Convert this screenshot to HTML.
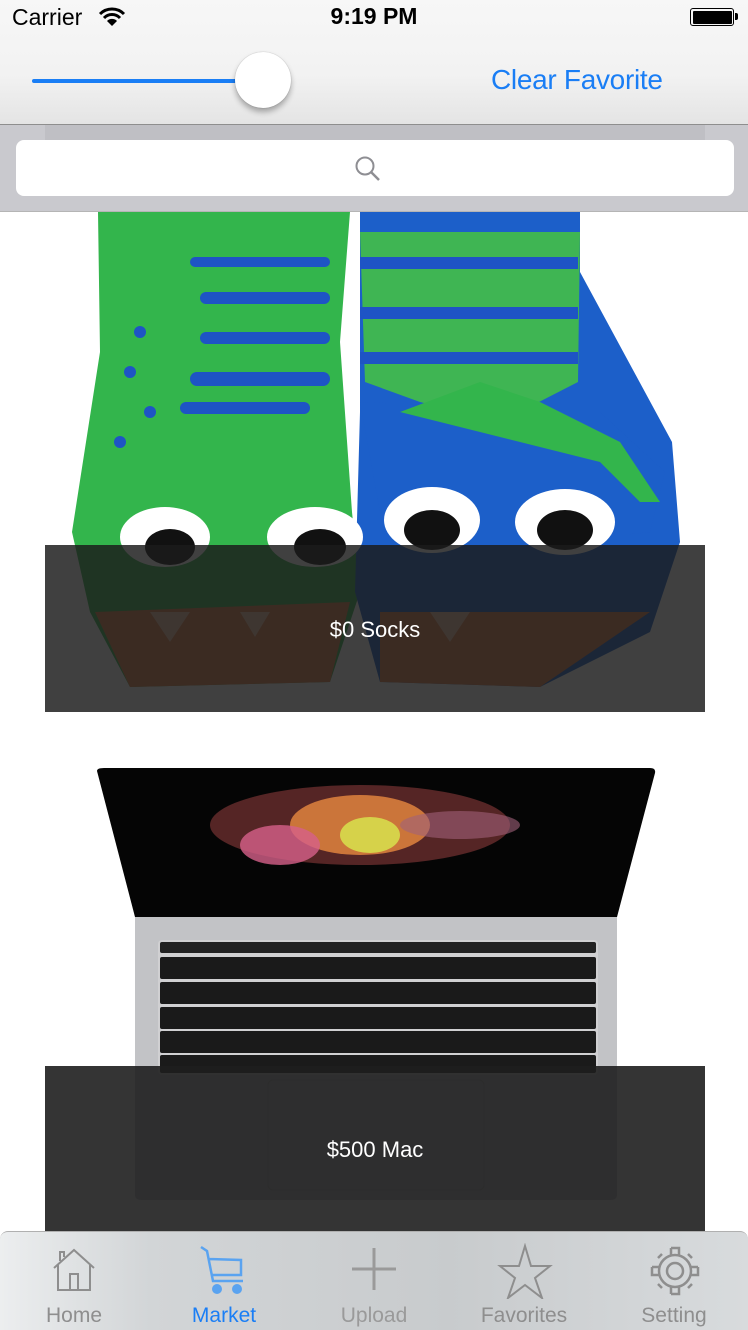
<!DOCTYPE html>
<html><head><meta charset="utf-8"><style>
*{margin:0;padding:0;box-sizing:border-box}
body{width:748px;height:1330px;overflow:hidden;background:#fff;font-family:"Liberation Sans",sans-serif;position:relative}
.abs{position:absolute}
</style></head><body>
<div class="abs" style="left:0;top:0;width:748px;height:125px;background:linear-gradient(#f7f7f7,#f2f2f2 60%,#e4e4e4);border-bottom:1px solid #8e8e8e"></div>
<div class="abs" style="left:12px;top:4px;font-size:23px;color:#000">Carrier</div>
<svg class="abs" style="left:98px;top:6px" width="28" height="22" viewBox="0 0 28 22"><path d="M2 8 A17 17 0 0 1 26 8" stroke="#000" stroke-width="3" fill="none"/><path d="M6 12 A11 11 0 0 1 22 12" stroke="#000" stroke-width="3" fill="none"/><path d="M14 20 L9 15 A7 7 0 0 1 19 15 Z" fill="#000"/></svg>
<div class="abs" style="left:0;width:748px;top:3px;text-align:center;font-size:23px;font-weight:bold">9:19 PM</div>
<div class="abs" style="left:690px;top:8px;width:44px;height:18px;border:1.5px solid #000;border-radius:3px;padding:1.5px"><div style="background:#000;width:100%;height:100%;border-radius:1px"></div></div>
<div class="abs" style="left:735px;top:13px;width:3px;height:7px;background:#000;border-radius:0 2px 2px 0"></div>
<div class="abs" style="left:32px;top:79px;width:220px;height:4px;background:#1a7ef5;border-radius:2px"></div>
<div class="abs" style="left:235px;top:52px;width:56px;height:56px;border-radius:50%;background:#fff;box-shadow:0 4px 6px rgba(0,0,0,.3),0 0 1px rgba(0,0,0,.3)"></div>
<div class="abs" style="left:491px;top:64px;font-size:28px;color:#1a7ef5;letter-spacing:-0.3px">Clear Favorite</div>
<div class="abs" style="left:0;top:125px;width:748px;height:87px;background:#c9c9ce;border-bottom:1px solid #b5b5b5"></div>
<div class="abs" style="left:45px;top:125px;width:660px;height:15px;background:#bfbfc4"></div>
<div class="abs" style="left:16px;top:140px;width:718px;height:56px;background:#fff;border-radius:8px"></div>
<svg class="abs" style="left:352px;top:154px" width="32" height="30" viewBox="0 0 32 30"><circle cx="13" cy="12" r="8.5" stroke="#8e8e93" stroke-width="2" fill="none"/><path d="M19 18 L27 26" stroke="#8e8e93" stroke-width="2.5"/></svg>
<svg class="abs" style="left:0;top:212px" width="748" height="480" viewBox="0 0 748 480">
<path d="M98 0 L350 0 L340 130 L352 300 L360 380 L330 470 L130 475 L90 400 L72 320 L100 140 Z" fill="#33b54c"/>
<path d="M360 0 L580 0 L580 60 L672 230 L680 330 L650 420 L540 475 L380 470 L355 380 L360 200 Z" fill="#1c5fc9"/>
<path d="M360 20 L580 20 L578 170 L500 210 L420 190 L365 170 Z" fill="#3fb553"/>
<g fill="#1e54c5"><rect x="190" y="45" width="140" height="10" rx="5"/><rect x="200" y="80" width="130" height="12" rx="6"/><rect x="200" y="120" width="130" height="12" rx="6"/><rect x="190" y="160" width="140" height="14" rx="7"/><rect x="180" y="190" width="130" height="12" rx="6"/><circle cx="140" cy="120" r="6"/><circle cx="130" cy="160" r="6"/><circle cx="150" cy="200" r="6"/><circle cx="120" cy="230" r="6"/></g>
<g fill="#1e54c5"><rect x="360" y="45" width="218" height="12"/><rect x="360" y="95" width="218" height="12"/><rect x="360" y="140" width="218" height="12"/></g>
<path d="M360 190 L600 200 L665 260 L650 320 L560 330 L450 330 L380 300 Z" fill="#1c5fc9"/>
<path d="M400 200 L480 170 L540 190 L620 230 L660 290 L640 290 L600 250 Z" fill="#33b54c"/>
<ellipse cx="165" cy="325" rx="45" ry="30" fill="#fff"/><ellipse cx="170" cy="335" rx="25" ry="18" fill="#111"/>
<ellipse cx="315" cy="325" rx="48" ry="30" fill="#fff"/><ellipse cx="320" cy="335" rx="26" ry="18" fill="#111"/>
<ellipse cx="432" cy="308" rx="48" ry="33" fill="#fff"/><ellipse cx="432" cy="318" rx="28" ry="20" fill="#111"/>
<ellipse cx="565" cy="310" rx="50" ry="33" fill="#fff"/><ellipse cx="565" cy="318" rx="28" ry="20" fill="#111"/>
<path d="M95 400 L350 390 L330 470 L130 475 Z" fill="#e07a45"/><path d="M380 400 L650 400 L540 475 L380 470 Z" fill="#e07a45"/>
<path d="M150 400 L170 430 L190 400 Z M240 400 L255 425 L270 400 Z M430 400 L450 430 L470 400 Z" fill="#f0c0a0"/>
</svg>
<div class="abs" style="left:45px;top:545px;width:660px;height:167px;background:rgba(28,28,28,.84);color:#fff;font-size:22px;text-align:center;line-height:170px">$0 Socks</div>
<svg class="abs" style="left:0;top:765px" width="748" height="440" viewBox="0 0 748 440">
<path d="M97 6 Q97 3 104 3 L650 3 Q656 3 655 8 L617 152 L135 152 Z" fill="#050505"/>
<ellipse cx="360" cy="60" rx="150" ry="40" fill="#8a3a3a" opacity=".6"/>
<ellipse cx="360" cy="60" rx="70" ry="30" fill="#e88a40" opacity=".8"/>
<ellipse cx="370" cy="70" rx="30" ry="18" fill="#d6d24a"/>
<ellipse cx="280" cy="80" rx="40" ry="20" fill="#d6608a" opacity=".8"/>
<ellipse cx="460" cy="60" rx="60" ry="14" fill="#a0607a" opacity=".6"/>
<path d="M135 152 L617 152 L617 430 Q617 435 610 435 L142 435 Q135 435 135 430 Z" fill="#c2c3c6"/>
<rect x="158" y="175" width="440" height="135" rx="4" fill="#d0d0d2"/>
<rect x="160" y="177" width="436" height="11" rx="2" fill="#222"/>
<g fill="#1a1a1a">
<rect x="160" y="192" width="436" height="22" rx="2"/>
<rect x="160" y="217" width="436" height="22" rx="2"/>
<rect x="160" y="242" width="436" height="22" rx="2"/>
<rect x="160" y="266" width="436" height="22" rx="2"/>
<rect x="160" y="290" width="436" height="18" rx="2"/>
</g>
<rect x="268" y="315" width="216" height="110" rx="5" fill="none" stroke="#aaa"/>
</svg>
<div class="abs" style="left:45px;top:1066px;width:660px;height:166px;background:rgba(30,30,30,.9);color:#fff;font-size:22px;text-align:center;line-height:168px">$500 Mac</div>
<div class="abs" style="left:0;top:1231px;width:748px;height:99px;background:linear-gradient(90deg,#eceeef,#d2d5d7 20%,#c8cbcd 60%,#d8dbdd);border-top:1px solid #b0b0b0;border-radius:8px 8px 0 0"></div>
<svg class="abs" style="left:50px;top:1246px" width="48" height="46" viewBox="0 0 48 46"><path d="M4 22 L24 4 L44 22 M8 19 L8 44 L40 44 L40 19 M20 44 L20 28 L28 28 L28 44 M10 15 L10 6 L14 6 L14 11" stroke="#8e8e8e" stroke-width="2" fill="none"/></svg>
<svg class="abs" style="left:195px;top:1243px" width="56" height="56" viewBox="0 0 56 56"><path d="M6 4 L12 8 L18 38 L48 38 M14 16 L46 17 L46 32 L17 32" stroke="#5aa3f0" stroke-width="2.5" fill="none"/><circle cx="22" cy="46" r="5" fill="#5aa3f0"/><circle cx="42" cy="46" r="5" fill="#5aa3f0"/></svg>
<svg class="abs" style="left:350px;top:1246px" width="48" height="46" viewBox="0 0 48 46"><path d="M24 2 L24 44 M2 23 L46 23" stroke="#9a9a9a" stroke-width="3"/></svg>
<svg class="abs" style="left:496px;top:1243px" width="58" height="56" viewBox="0 0 58 56"><path d="M29 3 L35 23 L54 23 L39 35 L46 55 L29 42 L12 55 L19 35 L4 23 L23 23 Z" stroke="#8e8e8e" stroke-width="2" fill="none"/></svg>
<svg class="abs" style="left:648px;top:1244px" width="54" height="54" viewBox="0 0 54 54"><g stroke="#8e8e8e" stroke-width="2.5" fill="none"><circle cx="27" cy="27" r="16"/><circle cx="27" cy="27" r="8"/><path d="M23 4 L31 4 L31 11 M23 4 L23 11 M23 50 L31 50 L31 43 M23 50 L23 43 M4 23 L4 31 L11 31 M4 23 L11 23 M50 23 L50 31 L43 31 M50 23 L43 23 M10 14 L14 10 M40 44 L44 40 M10 40 L14 44 M40 10 L44 14"/></g></svg>
<div class="abs" style="left:24px;width:100px;top:1304px;text-align:center;font-size:21px;color:#8e8e8e">Home</div>
<div class="abs" style="left:174px;width:100px;top:1304px;text-align:center;font-size:21px;color:#1a7ef5">Market</div>
<div class="abs" style="left:324px;width:100px;top:1304px;text-align:center;font-size:21px;color:#9a9a9a">Upload</div>
<div class="abs" style="left:464px;width:120px;top:1304px;text-align:center;font-size:21px;color:#8e8e8e">Favorites</div>
<div class="abs" style="left:624px;width:100px;top:1304px;text-align:center;font-size:21px;color:#8e8e8e">Setting</div>
</body></html>
